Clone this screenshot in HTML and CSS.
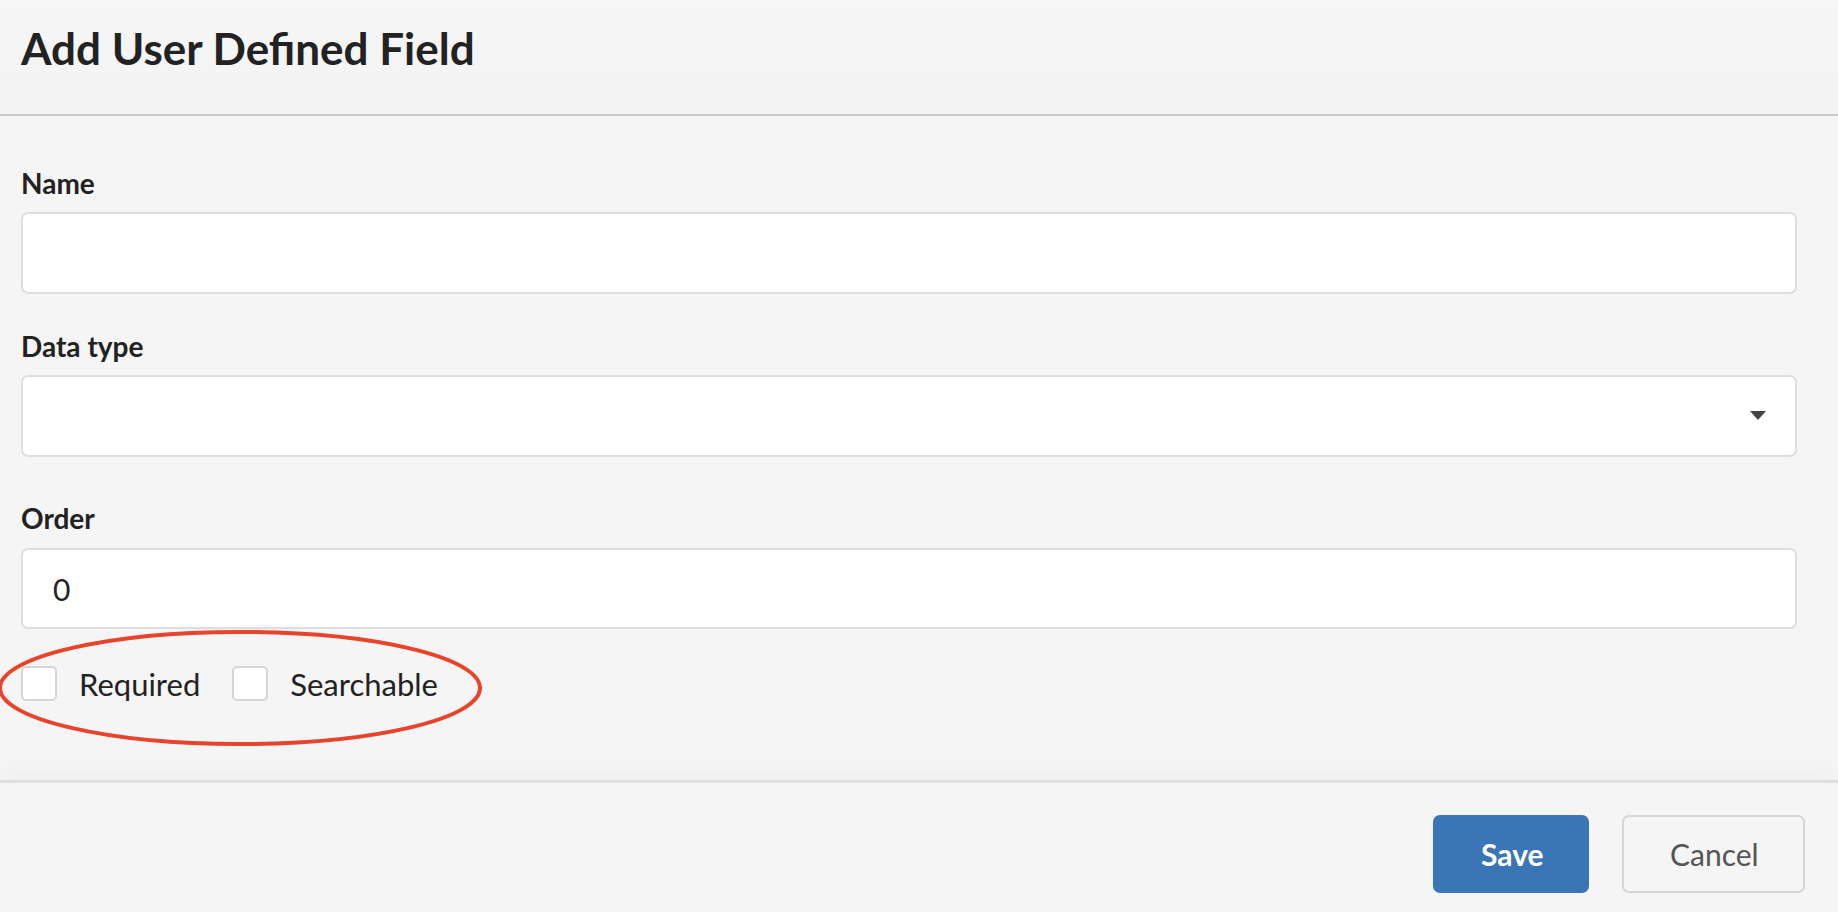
FILE: index.html
```html
<!DOCTYPE html>
<html lang="en">
<head>
<meta charset="utf-8">
<title>Add User Defined Field</title>
<link rel="stylesheet" href="styles.css">
</head>
<body>
<div class="dialog">
  <header class="dlg-header">
    <h1 class="dlg-title">Add User Defined Field</h1>
  </header>
  <main class="dlg-body">
    <div class="field field-name">
      <label class="field-label">Name</label>
      <div class="input"></div>
    </div>
    <div class="field field-type">
      <label class="field-label">Data type</label>
      <div class="input select">
        <svg class="caret" width="16" height="9" viewBox="0 0 16 9"><path d="M0 0H16L8 9Z" fill="#444"/></svg>
      </div>
    </div>
    <div class="field field-order">
      <label class="field-label">Order</label>
      <div class="input input-order"><span class="input-value">0</span></div>
    </div>
    <div class="checks">
      <label class="check"><span class="box"></span><span class="check-text">Required</span></label>
      <label class="check"><span class="box"></span><span class="check-text">Searchable</span></label>
    </div>
    <svg class="annot" width="490" height="124" viewBox="0 0 490 124">
      <ellipse cx="243" cy="60" rx="240" ry="56" fill="none" stroke="#e8432b" stroke-width="4"/>
    </svg>
  </main>
  <footer class="dlg-footer">
    <button class="btn btn-primary">Save</button>
    <button class="btn btn-default">Cancel</button>
  </footer>
</div>
</body>
</html>
```
FILE: styles.css
```css
html, body {
  margin: 0;
  padding: 0;
  height: 100%;
}
body {
  background: #f5f5f5;
  font-family: Lato, "Open Sans", sans-serif;
  color: #222;
}
.dialog {
  display: flex;
  flex-direction: column;
  height: 100vh;
}
.dlg-header {
  height: 116px;
  box-sizing: border-box;
  padding: 22px 21px 0 21px;
  border-bottom: 2px solid #c9c9c9;
  background: linear-gradient(180deg, #f6f6f6, #f3f3f3);
  flex: none;
}
.dlg-title {
  margin: 0;
  font-size: 44px;
  line-height: 53px;
  font-weight: 700;
  color: #222;
}
.dlg-body {
  flex: 1;
  position: relative;
  padding: 50px 41px 0 21px;
}
.field-label {
  display: block;
  font-size: 28px;
  line-height: 34px;
  font-weight: 700;
  color: #222;
  margin-bottom: 12px;
}
.field-name { margin-bottom: 35px; }
.field-type { margin-bottom: 44px; }
.field-order { margin-bottom: 37px; }
.field-order .field-label { margin-bottom: 13px; }
.input {
  box-sizing: border-box;
  height: 82px;
  background: #fff;
  border: 2px solid #dedede;
  border-radius: 7px;
  display: flex;
  align-items: center;
}
.select {
  height: 82px;
  justify-content: flex-end;
  padding-right: 29px;
}
.caret { display: block; margin-top: -2px; }
.input-order {
  height: 81px;
  padding-left: 30px;
}
.input-value {
  font-size: 30px;
  color: #222;
}
.checks {
  display: flex;
  align-items: center;
  gap: 32px;
  height: 35px;
}
.check {
  display: flex;
  align-items: center;
  gap: 22px;
}
.box {
  box-sizing: border-box;
  width: 36px;
  height: 35px;
  background: #fff;
  border: 2px solid #d6d6d6;
  border-radius: 5px;
}
.check-text {
  font-size: 31px;
  color: #222;
}
.annot {
  position: absolute;
  left: -3px;
  top: 512px;
}
.dlg-footer {
  flex: none;
  height: 132px;
  box-sizing: border-box;
  border-top: 3px solid #dfdfdf;
  box-shadow: 0 -10px 18px rgba(0,0,0,0.025);
  display: flex;
  justify-content: flex-end;
  align-items: flex-start;
  gap: 33px;
  padding: 32px 33px 0 0;
}
.btn {
  box-sizing: border-box;
  height: 78px;
  padding: 0 46px;
  font-family: Lato, "Open Sans", sans-serif;
  font-size: 30px;
  border-radius: 7px;
  cursor: pointer;
}
.btn-primary {
  background: #3a75b6;
  border: 2px solid #3a75b6;
  color: #fff;
  font-weight: 700;
  width: 156px;
}
.btn-default {
  background: #f5f5f5;
  border: 2px solid #d6d6d6;
  color: #555;
  font-weight: 400;
  width: 183px;
}
```
